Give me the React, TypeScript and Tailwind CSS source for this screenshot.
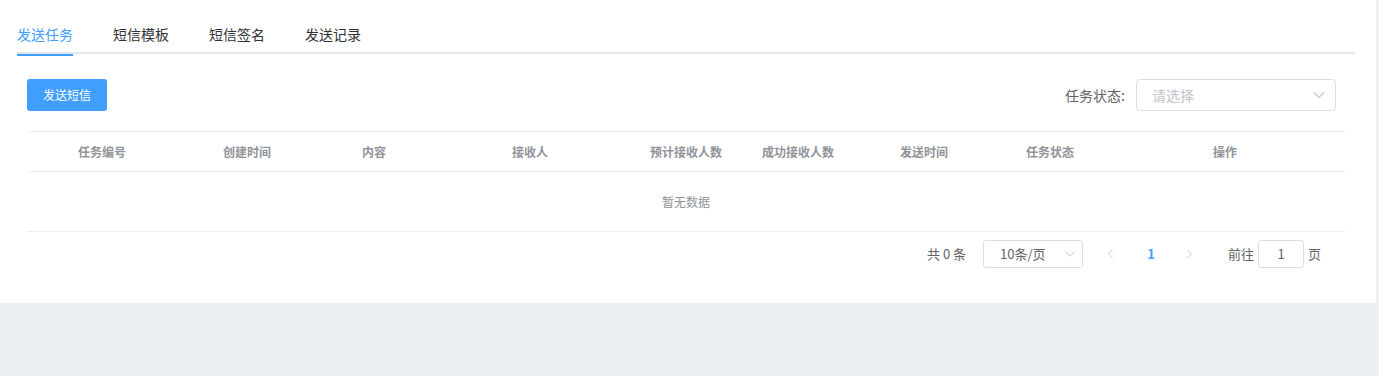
import React from "react";

const cols: { label: string; w: string }[] = [
  { label: "任务编号", w: "w-[150px]" },
  { label: "创建时间", w: "w-[140px]" },
  { label: "内容", w: "w-[114px]" },
  { label: "接收人", w: "w-[198px]" },
  { label: "预计接收人数", w: "w-[114px]" },
  { label: "成功接收人数", w: "w-[110px]" },
  { label: "发送时间", w: "w-[142px]" },
  { label: "任务状态", w: "w-[110px]" },
  { label: "操作", w: "flex-1" },
];

const Chevron = ({ dir, className }: { dir: "down" | "left" | "right"; className?: string }) => {
  const d =
    dir === "down" ? "M2 4.5 L7 9.5 L12 4.5" : dir === "left" ? "M9 2 L4 7 L9 12" : "M5 2 L10 7 L5 12";
  return (
    <svg width="14" height="14" viewBox="0 0 14 14" className={className}>
      <path d={d} fill="none" stroke="currentColor" strokeWidth="1.1" />
    </svg>
  );
};

export default function App() {
  return (
    <div
      className="flex h-[376px] w-full overflow-hidden"
      style={{ fontFamily: '"Noto Sans CJK SC", "Noto Sans", sans-serif' }}
    >
      <div className="flex flex-1 flex-col bg-[#e9eef3]">
        <div className="h-[303px] bg-white pl-[17px] pr-[21px] pt-[14px]">
          {/* Tabs */}
          <div className="relative flex h-[40px] border-b-2 border-[#e4e7ed]">
            {["发送任务", "短信模板", "短信签名", "发送记录"].map((t, i) => (
              <div
                key={t}
                className={`relative flex h-[40px] items-center text-[14px] ${
                  i === 0 ? "pr-[20px] text-[#409eff]" : "px-[20px] text-[#303133]"
                }`}
              >
                {t}
                {i === 0 && <div className="absolute bottom-[-2px] left-0 h-[2px] w-[56px] bg-[#409eff]" />}
              </div>
            ))}
          </div>

          <div className="px-[10px] pt-[25px]">
            {/* Form row */}
            <div className="flex h-[32px] items-center justify-between">
              <button className="h-[32px] w-[80px] rounded-[3px] bg-[#409eff] text-[12px] text-white">
                发送短信
              </button>
              <div className="mr-[9px] flex items-center">
                <span className="pr-[7px] text-[14px] text-[#606266]">
                  任务状态<span className="inline-block w-[8px]">:</span>
                </span>
                <div className="flex h-[32px] w-[200px] items-center justify-between rounded-[4px] border border-[#dcdfe6] pl-[15px] pr-[9px]">
                  <span className="text-[14px] text-[#c0c4cc]">请选择</span>
                  <Chevron dir="down" className="text-[#c0c4cc]" />
                </div>
              </div>
            </div>

            {/* Table */}
            <div className="mt-[20px] border-t border-[#ebeef5]">
              <div className="flex h-[40px] items-center border-b border-[#ebeef5]">
                {cols.map((c) => (
                  <div
                    key={c.label}
                    className={`${c.w} text-center text-[12px] font-bold text-[#909399]`}
                  >
                    {c.label}
                  </div>
                ))}
              </div>
              <div className="flex h-[60px] items-center justify-center border-b border-[#ebeef5] text-[12px] text-[#909399]">
                暂无数据
              </div>
            </div>

            {/* Pagination */}
            <div className="mt-[8px] flex h-[28px] items-center pl-[900px] text-[13px] text-[#606266]">
              <span className="w-[56px]">共 0 条</span>
              <div className="flex h-[28px] w-[100px] items-center justify-between rounded-[3px] border border-[#dcdfe6] pl-[16px] pr-[6px]">
                <span className="text-[13px] text-[#606266]">10条/页</span>
                <Chevron dir="down" className="h-[12px] w-[12px] text-[#c0c4cc]" />
              </div>
              <div className="ml-[10px] flex w-[36px] justify-center text-[#c0c4cc]">
                <Chevron dir="left" className="h-[12px] w-[12px]" />
              </div>
              <div className="flex w-[44px] justify-center text-[13px] font-bold text-[#409eff]">1</div>
              <div className="flex w-[32px] justify-center text-[#c0c4cc]">
                <Chevron dir="right" className="h-[12px] w-[12px]" />
              </div>
              <span className="ml-[23px] text-[13px]">前往</span>
              <div className="ml-[4px] flex h-[28px] w-[46px] items-center justify-center rounded-[3px] border border-[#dcdfe6] text-[13px]">
                1
              </div>
              <span className="ml-[4px] text-[13px]">页</span>
            </div>
          </div>
        </div>
      </div>
      <div className="h-full w-[3px] bg-[#f1f1f1]" />
    </div>
  );
}
